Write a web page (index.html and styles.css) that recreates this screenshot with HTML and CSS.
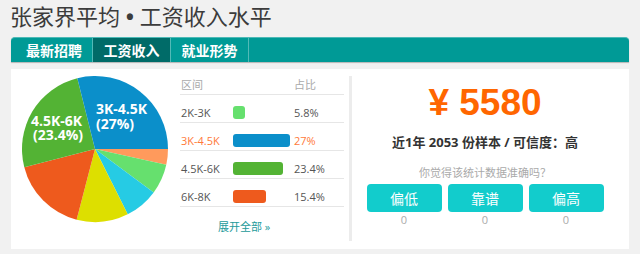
FILE: index.html
```html
<!DOCTYPE html>
<html>

<head>
    <title>张家界平均工资</title>
    <link rel="stylesheet" href="styles.css">
</head>

<body>
    <h1 class="page-title">张家界平均<span class="dot"> • </span>工资收入水平</h1>

    <div class="tabs">
        <a class="tab tab-first">最新招聘</a>
        <a class="tab active">工资收入</a>
        <a class="tab">就业形势</a>
    </div>

    <div class="panel">
        <div class="pie-box">
            <svg class="pie" width="169" height="180" viewBox="0 0 169 180">
                <path d="M84 80 L157 80 A73 73 0 0 1 155.27 95.8 Z" fill="#ff9a5c" />
                <path d="M84 80 L155.27 95.8 A73 73 0 0 1 142.68 123.42 Z" fill="#66e06e" />
                <path d="M84 80 L142.68 123.42 A73 73 0 0 1 116.69 145.28 Z" fill="#26cbe4" />
                <path d="M84 80 L116.69 145.28 A73 73 0 0 1 65.6 150.64 Z" fill="#dddf00" />
                <path d="M84 80 L65.6 150.64 A73 73 0 0 1 13.29 98.15 Z" fill="#ee5a1d" />
                <path d="M84 80 L13.29 98.15 A73 73 0 0 1 66.34 9.17 Z" fill="#53b334" />
                <path d="M84 80 L66.34 9.17 A73 73 0 0 1 157 80 Z" fill="#0b8fca" />
                <text class="pie-label" x="85" y="45">3K-4.5K</text>
                <text class="pie-label" x="85" y="60">(27%)</text>
                <text class="pie-label" x="20" y="57">4.5K-6K</text>
                <text class="pie-label" x="22" y="71">(23.4%)</text>
            </svg>
        </div>

        <div class="range-table">
            <div class="range-row range-head">
                <span>区间</span>
                <span></span>
                <span>占比</span>
            </div>
            <div class="range-row">
                <span>2K-3K</span>
                <span><i class="bar" style="width: 12px; background: #66e06e;"></i></span>
                <span>5.8%</span>
            </div>
            <div class="range-row current">
                <span>3K-4.5K</span>
                <span><i class="bar" style="width: 57px; background: #0b8fca;"></i></span>
                <span>27%</span>
            </div>
            <div class="range-row">
                <span>4.5K-6K</span>
                <span><i class="bar" style="width: 50px; background: #53b334;"></i></span>
                <span>23.4%</span>
            </div>
            <div class="range-row">
                <span>6K-8K</span>
                <span><i class="bar" style="width: 33px; background: #ee5a1d;"></i></span>
                <span>15.4%</span>
            </div>
            <a class="more">展开全部 »</a>
        </div>

        <div class="divider"></div>

        <div class="summary">
            <div class="price">¥ 5580</div>
            <div class="sample">近1年 2053 份样本 / 可信度：高</div>
            <div class="ask">你觉得该统计数据准确吗？</div>
            <div class="votes">
                <div class="vote">
                    <button>偏低</button>
                    <span>0</span>
                </div>
                <div class="vote">
                    <button>靠谱</button>
                    <span>0</span>
                </div>
                <div class="vote">
                    <button>偏高</button>
                    <span>0</span>
                </div>
            </div>
        </div>
    </div>
</body>

</html>
```

FILE: styles.css
```css
body {
    margin: 0;
    padding: 0 11px;
    background-color: #f1f1f1;
    font-family: "Open Sans", "Noto Sans CJK SC", sans-serif;
    color: #555;
}

.page-title {
    margin: 0 0 0 -1px;
    height: 30px;
    line-height: 30px;
    font-family: "Noto Sans CJK SC", sans-serif;
    font-size: 22px;
    font-weight: normal;
    color: #3c3c3c;
}

.page-title .dot {
    font-family: "Open Sans", sans-serif;
    font-weight: bold;
}

.tabs {
    display: flex;
    height: 25px;
    box-sizing: border-box;
    margin-top: 7px;
    background-color: #009a96;
    border-top: 1px solid #4db9b6;
    border-radius: 4px 4px 0 0;
    box-shadow: 0 1px 1px rgba(0, 0, 0, 0.25);
}

.tab {
    width: 77px;
    line-height: 24px;
    text-align: center;
    font-family: "Noto Sans CJK SC", sans-serif;
    font-size: 14px;
    font-weight: bold;
    color: #fff;
    border-right: 1px solid #52bab7;
}

.tab-first {
    width: 76px;
    padding-left: 5px;
    border-radius: 4px 0 0 0;
}

.tab.active {
    background-color: #006b68;
}

.panel {
    display: flex;
    height: 180px;
    margin-top: 7px;
    background-color: #fff;
}

.pie-box {
    width: 169px;
}

.pie {
    display: block;
}

.pie-label {
    font-family: "Open Sans", sans-serif;
    font-size: 14px;
    font-weight: bold;
    fill: #fff;
}

.range-table {
    width: 164px;
    font-size: 11px;
}

.range-row {
    display: grid;
    grid-template-columns: 52px 61px 51px;
    align-items: center;
    height: 28px;
    box-sizing: border-box;
    padding: 7px 0 0 1px;
    border-bottom: 1px solid #e6e6e6;
    color: #555;
}

.range-head {
    height: 26px;
    padding-top: 4px;
    color: #aaa;
}

.range-row.current {
    color: #ff7a3a;
}

.bar {
    display: block;
    height: 13px;
    border-radius: 3px;
}

.more {
    display: block;
    margin: 12px 0 0 38px;
    line-height: 16px;
    font-size: 11px;
    color: #239a9a;
}

.divider {
    width: 3px;
    margin: 7px 0 8px 5px;
    background-color: #ececec;
}

.summary {
    flex: 1;
    padding: 12px 11px 0 0;
    text-align: center;
}

.price {
    line-height: 44px;
    font-family: "Liberation Sans", sans-serif;
    font-size: 37px;
    font-weight: bold;
    color: #ff6600;
}

.sample {
    margin-top: 7px;
    line-height: 20px;
    font-size: 13px;
    font-weight: bold;
    color: #333;
}

.ask {
    margin-top: 13px;
    line-height: 16px;
    font-size: 11px;
    color: #aaa;
}

.votes {
    display: flex;
    justify-content: center;
    gap: 6px;
    margin-top: 3px;
}

.vote {
    display: flex;
    flex-direction: column;
    width: 75px;
}

.vote button {
    height: 28px;
    border: none;
    border-radius: 4px;
    background-color: #12cccc;
    color: #fff;
    font-family: "Noto Sans CJK SC", sans-serif;
    font-size: 14px;
}

.vote span {
    line-height: 16px;
    font-size: 11px;
    color: #aaa;
}
```
